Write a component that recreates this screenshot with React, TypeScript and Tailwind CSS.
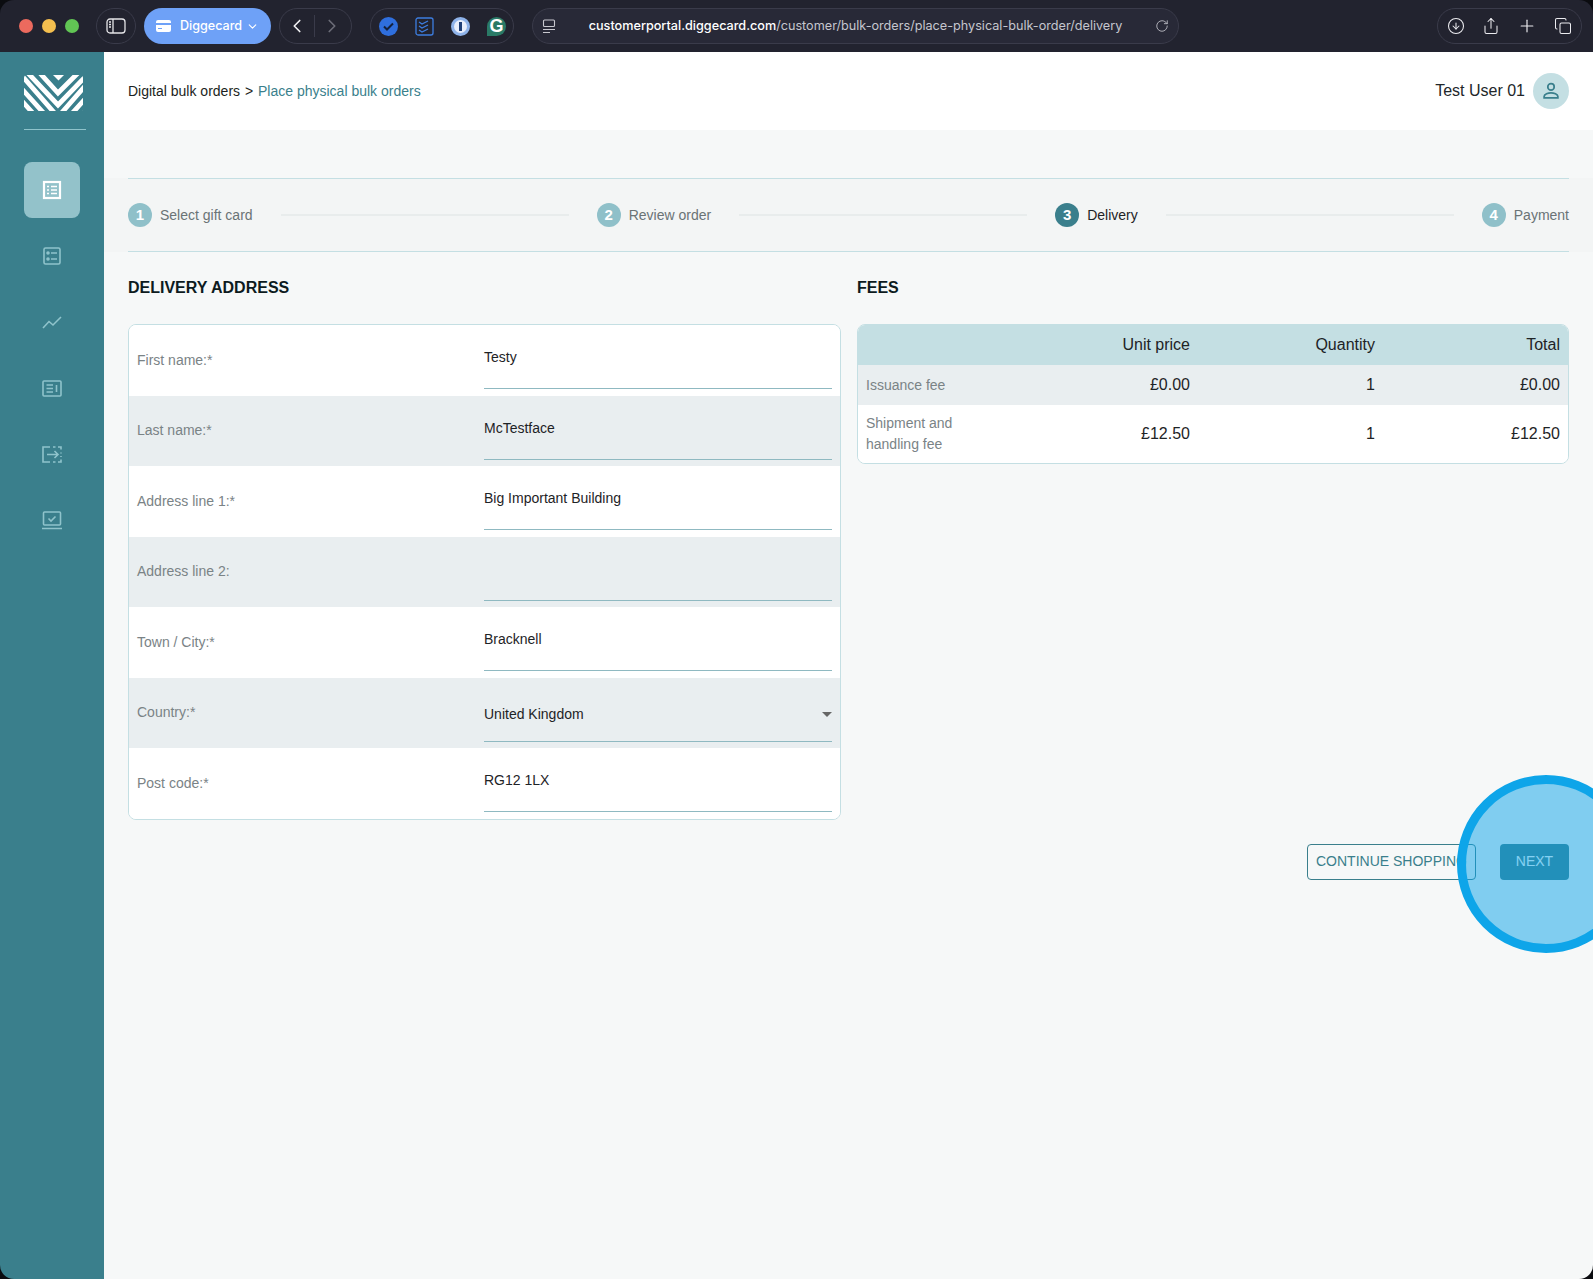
import { Fragment } from "react";
import { ChevronDown, ChevronLeft, ChevronRight, CircleArrowDown, Copy, Plus, RotateCw, Share } from "lucide-react";

const fields = [
  { label: "First name:*", value: "Testy" },
  { label: "Last name:*", value: "McTestface" },
  { label: "Address line 1:*", value: "Big Important Building" },
  { label: "Address line 2:", value: "" },
  { label: "Town / City:*", value: "Bracknell" },
  { label: "Country:*", value: "United Kingdom", select: true },
  { label: "Post code:*", value: "RG12 1LX" },
];

const steps = [
  { n: 1, label: "Select gift card" },
  { n: 2, label: "Review order" },
  { n: 3, label: "Delivery", active: true },
  { n: 4, label: "Payment" },
];

function Logo() {
  return (
    <svg width="59" height="36" viewBox="0 0 59 36">
      <defs>
        <clipPath id="logo-clip">
          <rect x="0" y="0" width="59" height="36" rx="3" />
        </clipPath>
      </defs>
      <g clipPath="url(#logo-clip)">
        <path d="M29 0H40L34.500 5.500Z" fill="#fff" />
        <g fill="none" stroke="#fff" strokeWidth="4.800">
          <path d="M14 -4L34 18L54 -2" />
          <path d="M2 -4L34 30L64 -1" />
          <path d="M-8 -6L34 42L76 -6" />
          <path d="M-20 -6L34 54L88 -6" />
          <path d="M-20 6L34 66L88 6" />
        </g>
      </g>
    </svg>
  );
}

function NavIcon({ kind, active }: { kind: number; active?: boolean }) {
  const color = active ? "#ffffff" : "#8fc3cb";
  return (
    <svg width="22" height="22" viewBox="0 0 22 22" fill="none" stroke={color} strokeWidth="1.600">
      {kind === 0 && (
        <>
          <rect x="3" y="3" width="16" height="16" strokeWidth="2.200" />
          <path d="M6 7.500H8M10 7.500H16M6 11H8M10 11H16M6 14.500H8M10 14.500H16" />
        </>
      )}
      {kind === 1 && (
        <>
          <rect x="3" y="3" width="16" height="16" rx="1.500" />
          <circle cx="7" cy="8" r="1" fill={color} />
          <circle cx="7" cy="14" r="1" fill={color} />
          <path d="M10 8H16M10 14H16" />
        </>
      )}
      {kind === 2 && <path d="M2 17L8 10.500L12 14L20 6" />}
      {kind === 3 && (
        <>
          <rect x="2" y="4" width="18" height="15" rx="1" />
          <path d="M5.500 8H12M5.500 11.500H12M5.500 15H12M15.500 8V15" />
        </>
      )}
      {kind === 4 && (
        <>
          <path d="M9 4H2V19H9" />
          <path d="M12 4H14.500M17 4H20V6.500M20 9.500V10.500M20 13V14M20 16.500V19H17M14.500 19H12" />
          <path d="M6 11.500H17M13.500 8L17 11.500L13.500 15" />
        </>
      )}
      {kind === 5 && (
        <>
          <rect x="2.500" y="3" width="17" height="13" rx="1" />
          <path d="M7.500 9.500L10 12L14.500 7.500M1 19.500H21" />
        </>
      )}
    </svg>
  );
}

function BrowserBar() {
  return (
    <div className="h-[52px] shrink-0 bg-[#22232f] flex items-center pl-[19px] pr-[11px] text-white">
      <div className="flex gap-[9px] mr-[17px] shrink-0">
        <span className="w-[14px] h-[14px] rounded-full bg-[#ec6a5e]" />
        <span className="w-[14px] h-[14px] rounded-full bg-[#f4bf4f]" />
        <span className="w-[14px] h-[14px] rounded-full bg-[#61c554]" />
      </div>
      <div className="w-[40px] h-[36px] shrink-0 rounded-full border border-[#3a3b4a] flex items-center justify-center mr-2">
        <svg width="20" height="16" viewBox="0 0 20 16" fill="none" stroke="#e5e5e8" strokeWidth="1.300">
          <rect x="1" y="1" width="18" height="14" rx="3" />
          <path d="M7 1V15" />
          <path d="M3 4H5M3 6.500H5M3 9H5" />
        </svg>
      </div>
      <div className="w-[127px] h-[36px] shrink-0 rounded-full bg-[#6ea1f7] flex items-center justify-center gap-[4px] text-[12.600px] mr-2 font-['Inter',sans-serif] font-medium">
        <svg width="15" height="12" viewBox="0 0 15 12">
          <path d="M2 0H13A2 2 0 0 1 15 2V3H0V2A2 2 0 0 1 2 0ZM0 5H15V10A2 2 0 0 1 13 12H2A2 2 0 0 1 0 10ZM2 8V9H6V8Z" fill="#fff" fillRule="evenodd" />
        </svg>
        <span className="ml-[5px]">Diggecard</span>
        <ChevronDown size={13} strokeWidth={2} />
      </div>
      <div className="w-[73px] h-[36px] shrink-0 rounded-full border border-[#3a3b4a] flex items-center justify-center mr-[18px]">
        <ChevronLeft size={22} strokeWidth={1.800} color="#f2f2f4" className="-ml-[2px]" />
        <span className="w-px h-[22px] bg-[#3a3b4a] mx-[6px]" />
        <ChevronRight size={22} strokeWidth={1.800} color="#6c6d78" />
      </div>
      <div className="w-[144px] h-[36px] shrink-0 rounded-full border border-[#3a3b4a] flex items-center justify-between pl-[8px] pr-[7px] mr-[18px]">
        <span className="w-[19px] h-[19px] rounded-full bg-[#2f6fde] flex items-center justify-center">
          <svg width="11" height="9" viewBox="0 0 11 9" fill="none" stroke="#14213d" strokeWidth="2">
            <path d="M1 4.500L4 7.500L10 1.500" />
          </svg>
        </span>
        <svg width="19" height="19" viewBox="0 0 19 19" fill="none" stroke="#3d7de0" strokeWidth="1.300">
          <rect x="1" y="1" width="17" height="17" rx="2" />
          <path d="M4 5L7 7L13 4M4 9L7 11L13 8M4 13L7 15L13 12" />
        </svg>
        <span className="w-[19px] h-[19px] rounded-full bg-[#e8eefb] border-[3px] border-[#8fb3ea] flex items-center justify-center">
          <span className="w-[3px] h-[9px] bg-[#1f3f78]" />
        </span>
        <span className="w-[19px] h-[19px] rounded-full rounded-bl-none bg-[#2a7a66] flex items-center justify-center text-[18px] font-bold leading-none">
          G
        </span>
      </div>
      <div className="w-[647px] h-[36px] shrink-0 rounded-full border border-[#3a3b4a] bg-[#282937] flex items-center pl-[9px] pr-[9px] text-[12.650px] font-['Inter',sans-serif]">
        <svg width="14" height="15" viewBox="0 0 14 15" fill="none" stroke="#c8c8cf" strokeWidth="1.100">
          <rect x="1.500" y="1" width="11" height="6.500" rx="1" />
          <path d="M1 10.500H13M1 13.500H8" />
        </svg>
        <div className="flex-1 text-center text-[#c5c6ce] whitespace-nowrap">
          <span className="text-white font-medium">customerportal.diggecard.com</span>/customer/bulk-orders/place-physical-bulk-order/delivery
        </div>
        <RotateCw size={14} strokeWidth={1.400} color="#c8c8cf" />
      </div>
      <div className="ml-auto w-[145px] h-[36px] shrink-0 rounded-full border border-[#3a3b4a] flex items-center justify-between px-[9px]">
        <CircleArrowDown size={18} strokeWidth={1.400} color="#ececf0" />
        <Share size={18} strokeWidth={1.400} color="#ececf0" />
        <Plus size={20} strokeWidth={1.400} color="#ececf0" />
        <Copy size={18} strokeWidth={1.400} color="#ececf0" />
      </div>
    </div>
  );
}

export default function App() {
  return (
    <div className="relative w-[1593px] h-[1279px] overflow-hidden bg-[#0b0c10] font-['Liberation_Sans',sans-serif]">
      <div className="h-full rounded-[14px] overflow-hidden flex flex-col">
        <BrowserBar />
        <div className="flex flex-1 min-h-0">
          <aside className="w-[104px] shrink-0 bg-[#3a7f8c] flex flex-col">
            <div className="ml-[24px] w-[62px] h-[78px] pt-[23px] border-b border-[#8fc3cb]">
              <Logo />
            </div>
            <div className="flex flex-col items-center mt-[32px] gap-[10px]">
              {[0, 1, 2, 3, 4, 5].map((k) => (
                <div
                  key={k}
                  className={`w-[56px] h-[56px] rounded-[8px] flex items-center justify-center ${k === 0 ? "bg-[#93c2ca]" : ""}`}
                >
                  <NavIcon kind={k} active={k === 0} />
                </div>
              ))}
            </div>
          </aside>

          <main className="flex-1 bg-[#f6f8f8] flex flex-col">
            <header className="h-[78px] bg-white flex items-center justify-between px-[24px] shrink-0">
              <div className="text-[14px] text-[#1b1f22]">
                Digital bulk orders <span className="ml-[1px]">&gt;</span>{" "}
                <span className="ml-[1px] text-[#3a7f8c]">Place physical bulk orders</span>
              </div>
              <div className="flex items-center gap-[8px]">
                <span className="text-[16px] text-[#22272a]">Test User 01</span>
                <span className="w-[36px] h-[36px] rounded-full bg-[#c4dfe3] flex items-center justify-center">
                  <svg width="22" height="22" viewBox="0 0 24 24" fill="none" stroke="#3a7f8c" strokeWidth="1.900">
                    <circle cx="12" cy="7.500" r="3.500" />
                    <path d="M4.500 19.500V18C4.500 15.500 9 14 12 14S19.500 15.500 19.500 18V19.500Z" />
                  </svg>
                </span>
              </div>
            </header>

            <div className="mt-[48px] px-[24px] bg-[#f3f5f5]">
              <div className="h-[74px] border-y border-y-[#c4dfe3] flex items-center">
                {steps.map((s, i) => (
                  <Fragment key={s.n}>
                    <span
                      className={`w-[24px] h-[24px] shrink-0 rounded-full flex items-center justify-center text-white text-[15px] font-bold ${s.active ? "bg-[#3a7f8c]" : "bg-[#8fc0c9]"}`}
                    >
                      {s.n}
                    </span>
                    <span className={`ml-[8px] text-[14px] whitespace-nowrap ${s.active ? "text-[#1e2326]" : "text-[#6a7376]"}`}>{s.label}</span>
                    {i < 3 && <span className="flex-1 h-[2px] bg-[#e8ecec] mx-[28px]" />}
                  </Fragment>
                ))}
              </div>
            </div>

            <div className="px-[24px]">
              <div className="grid grid-cols-[713px_712px] gap-x-[16px] mt-[26px]">
                <div>
                  <h2 className="text-[16px] leading-[20px] font-bold text-[#0d1b1e] mb-[26px]">DELIVERY ADDRESS</h2>
                  <div className="rounded-[8px] border border-[#c4dfe3] overflow-hidden bg-white">
                    {fields.map((f, i) => (
                      <div key={f.label} className={`h-[70.500px] grid grid-cols-[347px_1fr] px-[8px] ${i % 2 ? "bg-[#e9eef0]" : "bg-white"}`}>
                        <div className={`text-[14px] text-[#7a8386] ${f.select ? "pt-[24px]" : "pt-[24.600px]"}`}>{f.label}</div>
                        <div className="border-b border-[#8fb9c1] h-[64px] relative text-[14px] text-[#1e2326]">
                          <div className={f.select ? "pt-[26px]" : "pt-[22px]"}>{f.value}</div>
                          {f.select && (
                            <span className="absolute right-0 top-[34px] w-0 h-0 border-x-[5px] border-x-transparent border-t-[5px] border-t-[#666]" />
                          )}
                        </div>
                      </div>
                    ))}
                  </div>
                </div>

                <div>
                  <h2 className="text-[16px] leading-[20px] font-bold text-[#0d1b1e] mb-[26px]">FEES</h2>
                  <div className="rounded-[8px] border border-[#c4dfe3] overflow-hidden bg-white">
                    <div className="grid grid-cols-[190px_142px_185px_1fr] h-[40px] bg-[#c4dfe3] items-center pr-[8px] text-[16px] text-[#1e2326] text-right">
                      <span />
                      <span>Unit price</span>
                      <span>Quantity</span>
                      <span>Total</span>
                    </div>
                    <div className="grid grid-cols-[190px_142px_185px_1fr] h-[40px] bg-[#e9eef0] items-center pr-[8px] text-[16px] text-[#1e2326] text-right">
                      <span className="text-left pl-[8px] text-[14px] text-[#7a8386]">Issuance fee</span>
                      <span>£0.00</span>
                      <span>1</span>
                      <span>£0.00</span>
                    </div>
                    <div className="grid grid-cols-[190px_142px_185px_1fr] h-[58px] bg-white items-center pr-[8px] text-[16px] text-[#1e2326] text-right">
                      <span className="text-left pl-[8px] text-[14px] leading-[21px] text-[#7a8386]">
                        Shipment and
                        <br />
                        handling fee
                      </span>
                      <span>£12.50</span>
                      <span>1</span>
                      <span>£12.50</span>
                    </div>
                  </div>
                </div>
              </div>

              <div className="flex justify-end gap-[24px] mt-[24px]">
                <button className="w-[169px] h-[36px] rounded-[4px] border border-[#3a7f8c] text-[14px] text-[#3a7f8c] text-left pl-[8px] whitespace-nowrap">
                  CONTINUE SHOPPING
                </button>
                <button className="w-[69px] h-[36px] rounded-[4px] bg-[#3a7f8c] text-[14px] text-white">NEXT</button>
              </div>
            </div>
          </main>
        </div>
      </div>

      {/* highlight over the next button */}
      <div className="absolute left-[1457px] top-[775px] w-[178px] h-[178px] rounded-full bg-[#0aa2e8]/50 border-[9px] border-[#0ea5e9]" />
    </div>
  );
}
